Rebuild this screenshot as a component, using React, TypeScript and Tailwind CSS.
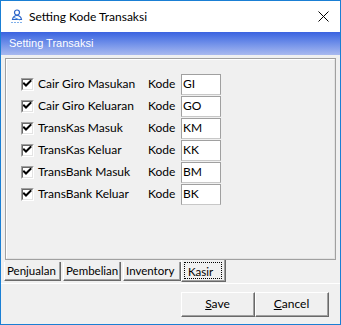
import React from "react";

const rows = [
  { label: "Cair Giro Masukan", code: "GI" },
  { label: "Cair Giro Keluaran", code: "GO" },
  { label: "TransKas Masuk", code: "KM" },
  { label: "TransKas Keluar", code: "KK" },
  { label: "TransBank Masuk", code: "BM" },
  { label: "TransBank Keluar", code: "BK" },
];

const font = { fontFamily: "Lato, 'Liberation Sans', sans-serif" };

function Check() {
  return (
    <div className="w-[13px] h-[13px] border-t border-l border-t-[#a0a0a0] border-l-[#a0a0a0] border-b border-r border-b-white border-r-white bg-white shrink-0">
      <div className="w-full h-full border-t border-l border-t-[#696969] border-l-[#696969] border-b border-r border-b-[#e3e3e3] border-r-[#e3e3e3] flex items-center justify-center">
        <svg width="9" height="9" viewBox="0 0 9 9">
          <path d="M1 3.5 L3 5.5 L7.5 1" stroke="#000" strokeWidth="2" fill="none" strokeLinecap="square" />
        </svg>
      </div>
    </div>
  );
}

function Tab({ label, w }: { label: string; w: string }) {
  return (
    <div className={`${w} h-[19px] mt-[2px] bg-[#f0f0f0] border-l border-l-white border-r border-r-[#696969] border-b border-b-[#696969] text-[11.5px] text-black leading-none shrink-0`}>
      <div className="h-full w-full border-r border-r-[#a0a0a0] border-b border-b-[#a0a0a0] flex items-center pl-[2px] whitespace-nowrap">{label}</div>
    </div>
  );
}

export default function App() {
  return (
    <div className="w-[341px] h-[325px] border border-[#1a7fd4] bg-[#f0f0f0] flex flex-col overflow-hidden" style={font}>
      {/* Title bar */}
      <div className="h-[31px] bg-white flex items-center shrink-0">
        <div className="w-[28px] flex justify-center pl-[3px]">
          <svg width="14" height="15" viewBox="0 0 14 15">
            <circle cx="7" cy="3.5" r="2.5" fill="none" stroke="#2a63c8" strokeWidth="1.2" />
            <path d="M2.5 10.5 C3 7.5 5 6.5 7 6.5 C9 6.5 11 7.5 11.5 10.5 Z" fill="none" stroke="#2a63c8" strokeWidth="1.2" />
            <path d="M4 8.5 L10 11" stroke="#4a8fe0" strokeWidth="1" />
            <path d="M1 13.5 L13 13.5" stroke="#7fb0ea" strokeWidth="1" strokeDasharray="2 1" />
          </svg>
        </div>
        <span className="text-[12px] text-black">Setting Kode Transaksi</span>
        <div className="flex-1" />
        <svg width="11" height="11" viewBox="0 0 11 11" className="mr-[11px]">
          <path d="M0.5 0.5 L10.5 10.5 M10.5 0.5 L0.5 10.5" stroke="#000" strokeWidth="1" />
        </svg>
      </div>
      {/* Gradient header */}
      <div className="h-[23px] shrink-0 flex items-center pl-[8px] bg-gradient-to-b from-[#3a62e0] to-[#a9b9ef]">
        <span className="text-[11px] text-white" style={{ fontFamily: "'Liberation Sans', Arial, sans-serif" }}>Setting Transaksi</span>
      </div>
      {/* Page control */}
      <div className="flex flex-col px-[4px] pt-[3px] shrink-0">
        <div className="h-[202px] border border-[#a0a0a0]">
          <div className="h-full border border-t-white border-l-white border-b-[#e3e3e3] border-r-[#e3e3e3] pt-[13px] pl-[14px] flex flex-col">
            {rows.map((r) => (
              <div key={r.code} className="h-[22px] flex items-center text-[12px] text-black">
                <div className="w-[127px] flex items-center gap-[4px]">
                  <Check />
                  <span>{r.label}</span>
                </div>
                <span className="w-[33px]">Kode</span>
                <div className="w-[40px] h-[21px] bg-white border border-t-[#a0a0a0] border-l-[#a0a0a0] border-r-[#a0a0a0] border-b-[#c8c8c8] flex items-center pl-[1px] text-[12px]">
                  {r.code}
                </div>
              </div>
            ))}
          </div>
        </div>
        {/* Tabs */}
        <div className="h-[23px] flex -ml-[1px]">
          <Tab label="Penjualan" w="w-[57px]" />
          <div className="w-[2px] shrink-0" />
          <Tab label="Pembelian" w="w-[58px]" />
          <div className="w-[2px] shrink-0" />
          <Tab label="Inventory" w="w-[58px]" />
          <div className="w-[45px] h-[22px] bg-[#f0f0f0] border-l border-l-white border-r border-r-[#696969] border-b border-b-[#696969] shrink-0">
            <div className="h-full border-r border-r-[#a0a0a0] border-b border-b-[#a0a0a0] px-[2px] pt-[2px] pb-[1px]">
              <div className="h-full border border-dotted border-black flex items-center pl-[3px] pt-[2px] text-[11.5px] text-black leading-none">Kasir</div>
            </div>
          </div>
        </div>
      </div>
      {/* Bottom bar */}
      <div className="flex-1 border-t border-t-white flex justify-end items-start pt-[8px] pr-[11px]">
        <div className="flex">
          {["Save", "Cancel"].map((b) => (
            <div key={b} className="w-[74px] h-[25px] border border-t-white border-l-white border-b-[#696969] border-r-[#696969] bg-[#f0f0f0]">
              <div className="h-full border-b border-r border-b-[#a0a0a0] border-r-[#a0a0a0] flex items-center justify-center text-[12px] text-black">
                <span><span className="underline">{b[0]}</span>{b.slice(1)}</span>
              </div>
            </div>
          ))}
        </div>
      </div>
    </div>
  );
}
